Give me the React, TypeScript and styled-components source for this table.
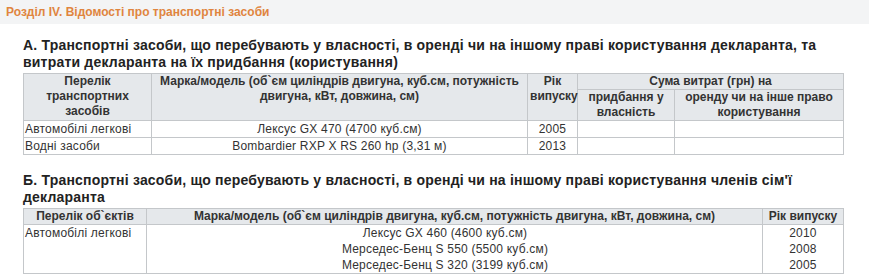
import styled, { createGlobalStyle } from "styled-components";

const GlobalStyle = createGlobalStyle`
  body {
    margin: 0;
    background: #ffffff;
    font-family: "Liberation Sans", Arial, sans-serif;
    color: #333;
  }
`;

const Page = styled.div`
  width: 869px;
  height: 277px;
  overflow: hidden;
`;

const SectionBar = styled.div`
  height: 24px;
  background: #f3f4f5;
  padding-left: 6px;
  display: flex;
  align-items: center;
  font-size: 12px;
  font-weight: bold;
  color: #e0853f;
`;

const Content = styled.div`
  padding: 0 26px 0 23px;
  width: 820px;
`;

const Heading = styled.h3<{ $top: number }>`
  margin: ${(p) => p.$top}px 0 2px;
  font-size: 14px;
  line-height: 17px;
  font-weight: bold;
  color: #222;
  letter-spacing: 0.2px;
`;

const Table = styled.table`
  width: 820px;
  border-collapse: collapse;
  table-layout: fixed;
  font-size: 12px;
  border: 1px solid #c4c7ca;
`;

const Th = styled.th`
  background: #e5e8eb;
  border: 1px solid #c4c7ca;
  font-weight: bold;
  color: #333;
  line-height: 15px;
  padding: 0 2px;
  text-align: center;
  vertical-align: top;
`;

const Td = styled.td<{ $align?: string; $plain?: boolean }>`
  border: 1px solid #c4c7ca;
  ${(p) => (p.$plain ? "border-top: none; border-bottom: none;" : "")}
  line-height: 16px;
  padding: 0 1px;
  color: #333;
  text-align: ${(p) => p.$align || "left"};
  vertical-align: top;
  white-space: nowrap;
  letter-spacing: 0.2px;
`;

const ModelCell = styled(Td)`
  padding-right: 20px;
`;

const ownRows = [
  { kind: "Автомобілі легкові", model: "Лексус GX 470 (4700 куб.см)", year: "2005" },
  { kind: "Водні засоби", model: "Bombardier RXP X RS 260 hp (3,31 м)", year: "2013" },
];

const familyRows = [
  { model: "Лексус GX 460 (4600 куб.см)", year: "2010" },
  { model: "Мерседес-Бенц S 550 (5500 куб.см)", year: "2008" },
  { model: "Мерседес-Бенц S 320 (3199 куб.см)", year: "2005" },
];

export default function App() {
  return (
    <Page>
      <GlobalStyle />
      <SectionBar>Розділ IV. Відомості про транспортні засоби</SectionBar>
      <Content>
        <Heading $top={13}>
          А. Транспортні засоби, що перебувають у власності, в оренді чи на іншому праві
          користування декларанта, та витрати декларанта на їх придбання (користування)
        </Heading>
        <Table>
          <colgroup>
            <col style={{ width: 128 }} />
            <col style={{ width: 376 }} />
            <col style={{ width: 50 }} />
            <col style={{ width: 97 }} />
            <col style={{ width: 169 }} />
          </colgroup>
          <thead>
            <tr>
              <Th rowSpan={2}>Перелік транспортних засобів</Th>
              <Th rowSpan={2}>
                Марка/модель (об`єм циліндрів двигуна, куб.см, потужність двигуна, кВт,
                довжина, см)
              </Th>
              <Th rowSpan={2}>Рік випуску</Th>
              <Th colSpan={2}>Сума витрат (грн) на</Th>
            </tr>
            <tr>
              <Th>придбання у власність</Th>
              <Th>оренду чи на інше право користування</Th>
            </tr>
          </thead>
          <tbody>
            {ownRows.map((r) => (
              <tr key={r.kind}>
                <Td>{r.kind}</Td>
                <Td $align="center">{r.model}</Td>
                <Td $align="center">{r.year}</Td>
                <Td />
                <Td />
              </tr>
            ))}
          </tbody>
        </Table>

        <Heading $top={17}>
          Б. Транспортні засоби, що перебувають у власності, в оренді чи на іншому праві
          користування членів сім'ї декларанта
        </Heading>
        <Table>
          <colgroup>
            <col style={{ width: 123 }} />
            <col style={{ width: 616 }} />
            <col style={{ width: 81 }} />
          </colgroup>
          <thead>
            <tr>
              <Th>Перелік об`єктів</Th>
              <Th>
                Марка/модель (об`єм циліндрів двигуна, куб.см, потужність двигуна, кВт,
                довжина, см)
              </Th>
              <Th>Рік випуску</Th>
            </tr>
          </thead>
          <tbody>
            {familyRows.map((r, i) => (
              <tr key={r.model}>
                {i === 0 && (
                  <Td rowSpan={familyRows.length}>Автомобілі легкові</Td>
                )}
                <ModelCell $align="center" $plain>
                  {r.model}
                </ModelCell>
                <Td $align="center" $plain>
                  {r.year}
                </Td>
              </tr>
            ))}
          </tbody>
        </Table>
      </Content>
    </Page>
  );
}
